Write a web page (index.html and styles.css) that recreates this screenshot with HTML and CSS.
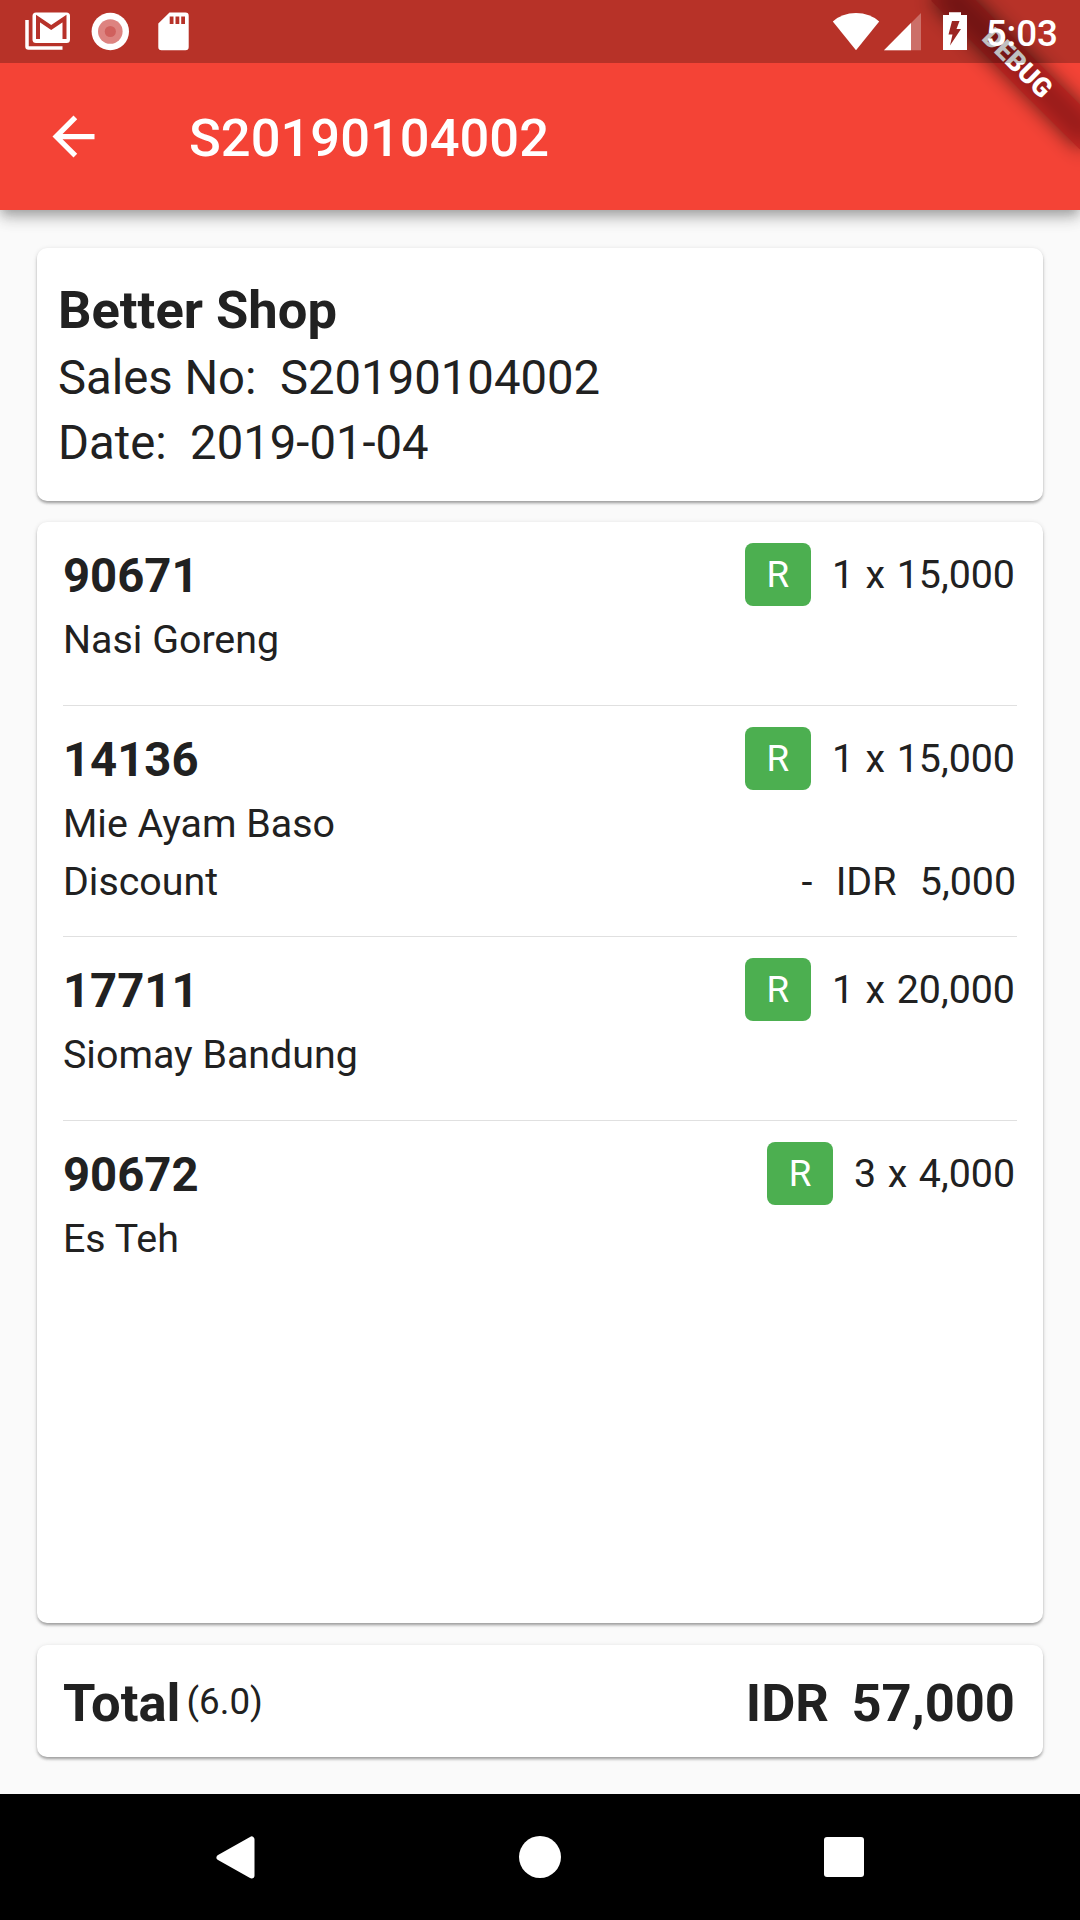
FILE: index.html
```html
<!DOCTYPE html>
<html lang="en">
<head>
  <meta charset="UTF-8">
  <title>S20190104002</title>
  <link rel="stylesheet" href="styles.css">
</head>
<body>
  <div class="screen">
    <header class="appbar">
      <svg class="back" viewBox="0 0 24 24"><path fill="#fff" d="M20 11H7.83l5.59-5.59L12 4l-8 8 8 8 1.41-1.41L7.83 13H20v-2z"/></svg>
      <h1 class="title">S20190104002</h1>
    </header>

    <main class="content">
      <section class="card shop">
        <h2 class="shop-name">Better Shop</h2>
        <p class="shop-line">Sales No:&nbsp; S20190104002</p>
        <p class="shop-line">Date:&nbsp; 2019-01-04</p>
      </section>

      <section class="card items">
        <div class="item">
          <div class="row">
            <span class="code">90671</span>
            <span class="badge">R</span>
            <span class="qty">1 x 15,000</span>
          </div>
          <div class="line">Nasi Goreng</div>
        </div>
        <div class="item discounted">
          <div class="row">
            <span class="code">14136</span>
            <span class="badge">R</span>
            <span class="qty">1 x 15,000</span>
          </div>
          <div class="line">Mie Ayam Baso</div>
          <div class="line"><span>Discount</span><span class="discount">-&nbsp; IDR&nbsp; 5,000</span></div>
        </div>
        <div class="item">
          <div class="row">
            <span class="code">17711</span>
            <span class="badge">R</span>
            <span class="qty">1 x 20,000</span>
          </div>
          <div class="line">Siomay Bandung</div>
        </div>
        <div class="item">
          <div class="row">
            <span class="code">90672</span>
            <span class="badge">R</span>
            <span class="qty">3 x 4,000</span>
          </div>
          <div class="line">Es Teh</div>
        </div>
      </section>

      <section class="card total">
        <span class="total-label">Total</span>
        <span class="total-count">(6.0)</span>
        <span class="total-sum">IDR&nbsp; 57,000</span>
      </section>
    </main>

    <footer class="navbar">
      <svg width="44" height="44" viewBox="0 0 44 44"><path d="M5 22L37 4V40Z" fill="#fff" stroke="#fff" stroke-width="6" stroke-linejoin="round" transform="translate(.5 .5)"/></svg>
      <svg width="44" height="44" viewBox="0 0 44 44"><circle cx="22" cy="22" r="21" fill="#fff"/></svg>
      <svg width="44" height="44" viewBox="0 0 44 44"><rect x="2" y="2" width="40" height="40" rx="3" fill="#fff"/></svg>
    </footer>

    <div class="debug"><span>DEBUG</span></div>

    <!-- translucent, lies over the app bar and the banner -->
    <div class="statusbar">
      <svg width="200" height="63" viewBox="0 0 200 63">
        <path d="M27 20V46.500Q27 48 28.500 48H62.500" fill="none" stroke="#fff" stroke-width="3.500"/>
        <rect x="32.500" y="12.500" width="37.500" height="30.500" rx="3.500" fill="#fff"/>
        <path d="M38 39V18.500L51.200 27.500L64.500 18.500V39" fill="none" stroke="#b7322a" stroke-width="4"/>
        <circle cx="110.300" cy="31.500" r="18.700" fill="#fff"/>
        <circle cx="110.300" cy="31.500" r="12.300" fill="#dd8380"/>
        <circle cx="110.300" cy="31.500" r="5.600" fill="#d0605d"/>
        <path fill="#fff" fill-rule="evenodd" d="M169.500 12.500H185.500Q188.700 12.500 188.700 15.700V47Q188.700 50.200 185.500 50.200H161.500Q158.300 50.200 158.300 47V23.500ZM169.700 16.500V24H173.500V16.500ZM175.500 16.500V24H179.300V16.500ZM181.200 16.500V24H185V16.500Z"/>
      </svg>
      <div class="status-right">
        <svg width="140" height="63" viewBox="0 0 140 63">
          <path d="M25 50.200L1.800 21.500Q11 13 25 13T48.200 21.500Z" fill="#fff"/>
          <path d="M53 50.200L90 13V50.200Z" fill="#fff" opacity=".3"/>
          <path d="M53 50.200L80 23V50.200Z" fill="#fff"/>
          <path d="M112 15H118V12.300H130V15H136V50H112Z" fill="#fff"/>
          <path d="M121 21H128.500L125.500 29H130L119 45.500L121.500 34.500H117.500Z" fill="#9b2622"/>
        </svg>
        <span class="clock">5:03</span>
      </div>
    </div>
  </div>
</body>
</html>
```
FILE: styles.css
```css
* {
  box-sizing: border-box;
}
body {
  margin: 0;
  font-family: Roboto, "Liberation Sans", sans-serif;
  color: #212121;
}
h1, h2, p {
  margin: 0;
}
svg {
  display: block;
}
.screen {
  position: relative;
  display: flex;
  flex-direction: column;
  width: 1080px;
  height: 1920px;
  overflow: hidden;
  background: #fafafa;
}

/* app bar */
.appbar {
  display: flex;
  align-items: center;
  height: 210px;
  padding: 63px 42px 0;
  background: #f44336;
  color: #fff;
  box-shadow: 0 5px 10px -2px rgba(0,0,0,.2), 0 10px 13px rgba(0,0,0,.14), 0 2px 20px rgba(0,0,0,.12);
}
.back {
  width: 63px;
  height: 63px;
}
.title {
  margin-left: 84px;
  padding-top: 2px;
  font-size: 52.5px;
  font-weight: 500;
}

/* cards */
.content {
  flex: 1;
  display: flex;
  flex-direction: column;
  gap: 21px;
  padding: 38px 37px 37px;
}
.card {
  background: #fff;
  border-radius: 10px;
  box-shadow: 0 3px 3px -1px rgba(0,0,0,.2), 0 2px 3px rgba(0,0,0,.14), 0 1px 5px rgba(0,0,0,.12);
}
.shop {
  height: 253px;
  padding: 28px 21px 0;
}
.shop-name {
  margin-bottom: 1px;
  font-size: 52.5px;
  line-height: 69px;
  font-weight: 700;
}
.shop-line {
  font-size: 47.25px;
  line-height: 65px;
}
.items {
  flex: 1;
  margin-bottom: 1px;
  padding: 0 26px;
}
.item {
  height: 184px;
  padding-top: 21px;
  border-bottom: 1px solid #e0e0e0;
}
.item.discounted {
  height: 231px;
}
.item:last-child {
  border-bottom: none;
}
.row {
  display: flex;
  height: 68px;
}
.code {
  flex: 1;
  font-size: 47.25px;
  font-weight: 700;
  line-height: 66px;
}
.badge {
  width: 66px;
  height: 63px;
  border-radius: 8px;
  background: #4caf50;
  color: #fff;
  font-size: 36.75px;
  line-height: 64px;
  text-align: center;
}
.qty {
  margin: 0 2px 0 21px;
  font-size: 39.375px;
  line-height: 63px;
  word-spacing: 1.8px;
}
.line {
  display: flex;
  justify-content: space-between;
  font-size: 39.375px;
  line-height: 58px;
}
.discount {
  margin-right: 1px;
  word-spacing: 1.9px;
}
.total {
  display: flex;
  align-items: center;
  height: 112px;
  padding: 3px 28px 0 26px;
}
.total-label,
.total-sum {
  font-size: 52.5px;
  font-weight: 700;
}
.total-count {
  margin-left: 6px;
  padding-bottom: 2px;
  font-size: 36.75px;
}
.total-sum {
  margin-left: auto;
  word-spacing: -1.8px;
}

/* system navigation */
.navbar {
  display: flex;
  justify-content: center;
  align-items: center;
  gap: 260px;
  height: 126px;
  background: #000;
}

/* corner banner, turned around the top right corner of the screen */
.debug {
  position: absolute;
  top: 73.5px;
  left: 975px;
  width: 210px;
  height: 31.5px;
  transform-origin: 105px -73.5px;
  transform: rotate(45deg);
  color: #fff;
  font-size: 26.8px;
  font-weight: 900;
  line-height: 31.5px;
  text-align: center;
}
.debug::before {
  content: "";
  position: absolute;
  inset: 0;
  background: rgba(0,0,0,.6);
  filter: blur(10px);
}
.debug span {
  position: absolute;
  inset: 0;
  background: rgba(183,28,28,.63);
}

/* status bar */
.statusbar {
  position: absolute;
  top: 0;
  left: 0;
  display: flex;
  justify-content: space-between;
  width: 100%;
  height: 63px;
  padding-right: 22px;
  background: rgba(0,0,0,.25);
  color: #fff;
}
.status-right {
  display: flex;
}
.clock {
  margin-left: 15px;
  font-size: 36.75px;
  font-weight: 500;
  line-height: 67px;
}
```
